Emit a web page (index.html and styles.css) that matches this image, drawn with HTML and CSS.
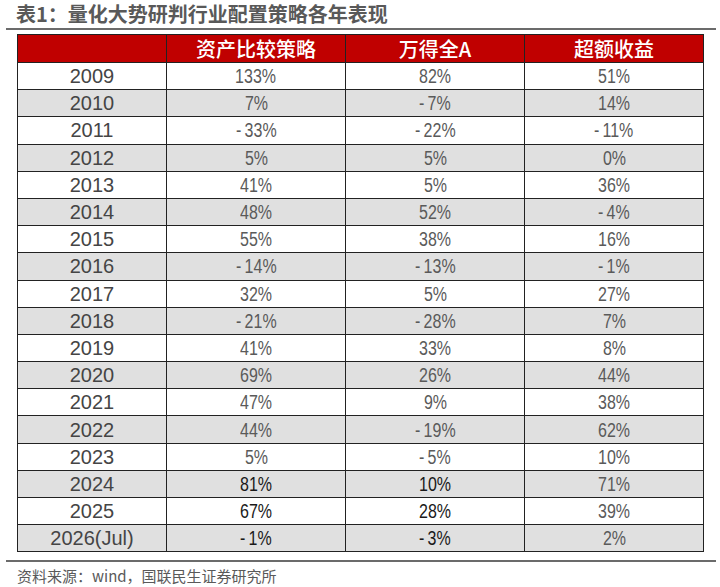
FILE: index.html
```html
<!DOCTYPE html>
<html lang="zh">
<head>
<meta charset="utf-8">
<link rel="stylesheet" href="styles.css">
</head>
<body>
<div class="page">
  <div class="title">表1：量化大势研判行业配置策略各年表现</div>
  <div class="rule"></div>
  <table class="tbl">
    <colgroup>
      <col class="c0"><col class="c1"><col class="c1"><col class="c1">
    </colgroup>
    <thead>
      <tr><th></th><th>资产比较策略</th><th>万得全A</th><th>超额收益</th></tr>
    </thead>
    <tbody>
      <tr><td class="yr">2009</td><td><span class="n">133%</span></td><td><span class="n">82%</span></td><td><span class="n">51%</span></td></tr>
      <tr class="alt"><td class="yr">2010</td><td><span class="n">7%</span></td><td><span class="n">-&#8201;7%</span></td><td><span class="n">14%</span></td></tr>
      <tr><td class="yr">2011</td><td><span class="n">-&#8201;33%</span></td><td><span class="n">-&#8201;22%</span></td><td><span class="n">-&#8201;11%</span></td></tr>
      <tr class="alt"><td class="yr">2012</td><td><span class="n">5%</span></td><td><span class="n">5%</span></td><td><span class="n">0%</span></td></tr>
      <tr><td class="yr">2013</td><td><span class="n">41%</span></td><td><span class="n">5%</span></td><td><span class="n">36%</span></td></tr>
      <tr class="alt"><td class="yr">2014</td><td><span class="n">48%</span></td><td><span class="n">52%</span></td><td><span class="n">-&#8201;4%</span></td></tr>
      <tr><td class="yr">2015</td><td><span class="n">55%</span></td><td><span class="n">38%</span></td><td><span class="n">16%</span></td></tr>
      <tr class="alt"><td class="yr">2016</td><td><span class="n">-&#8201;14%</span></td><td><span class="n">-&#8201;13%</span></td><td><span class="n">-&#8201;1%</span></td></tr>
      <tr><td class="yr">2017</td><td><span class="n">32%</span></td><td><span class="n">5%</span></td><td><span class="n">27%</span></td></tr>
      <tr class="alt"><td class="yr">2018</td><td><span class="n">-&#8201;21%</span></td><td><span class="n">-&#8201;28%</span></td><td><span class="n">7%</span></td></tr>
      <tr><td class="yr">2019</td><td><span class="n">41%</span></td><td><span class="n">33%</span></td><td><span class="n">8%</span></td></tr>
      <tr class="alt"><td class="yr">2020</td><td><span class="n">69%</span></td><td><span class="n">26%</span></td><td><span class="n">44%</span></td></tr>
      <tr><td class="yr">2021</td><td><span class="n">47%</span></td><td><span class="n">9%</span></td><td><span class="n">38%</span></td></tr>
      <tr class="alt"><td class="yr">2022</td><td><span class="n">44%</span></td><td><span class="n">-&#8201;19%</span></td><td><span class="n">62%</span></td></tr>
      <tr><td class="yr">2023</td><td><span class="n">5%</span></td><td><span class="n">-&#8201;5%</span></td><td><span class="n">10%</span></td></tr>
      <tr class="alt"><td class="yr">2024</td><td class="dk"><span class="n">81%</span></td><td class="dk"><span class="n">10%</span></td><td><span class="n">71%</span></td></tr>
      <tr><td class="yr">2025</td><td class="dk"><span class="n">67%</span></td><td class="dk"><span class="n">28%</span></td><td><span class="n">39%</span></td></tr>
      <tr class="alt"><td class="yr">2026(Jul)</td><td class="dk"><span class="n">-&#8201;1%</span></td><td class="dk"><span class="n">-&#8201;3%</span></td><td><span class="n">2%</span></td></tr>
    </tbody>
  </table>
  <div class="rule bottom"></div>
  <div class="source">资料来源：wind，国联民生证券研究所</div>
</div>
</body>
</html>
```

FILE: styles.css
```css
html, body {
  margin: 0;
  padding: 0;
  background: #ffffff;
}
.page {
  width: 720px;
  height: 587px;
  padding-top: 3px;
  box-sizing: border-box;
  font-family: "Liberation Sans", "Noto Sans CJK SC", sans-serif;
}
.title {
  margin-left: 16px;
  font-family: "Noto Sans CJK SC", sans-serif;
  font-weight: 700;
  font-size: 20px;
  line-height: 22px;
  color: #595959;
}
.rule {
  margin: 3px 4px 0 6px;
  height: 2px;
  background: #6b6b6b;
}
.tbl {
  margin: 4px 0 0 17px;
  border-collapse: collapse;
  table-layout: fixed;
  width: 686px;
  border: 1.5px solid #222;
}
.c0 { width: 149px; }
.c1 { width: 179px; }
.tbl th {
  background: #c00000;
  color: #ffffff;
  font-family: "Noto Sans CJK SC", sans-serif;
  font-weight: 500;
  font-size: 20px;
  height: 27px;
  padding: 0;
  line-height: 22px;
  border: 1px solid #222;
}
.tbl td {
  height: 26.2px;
  padding: 0;
  text-align: center;
  border: 1px solid #222;
  font-family: "Liberation Sans", sans-serif;
  font-size: 20px;
  color: #5a5a5a;
  line-height: 20px;
}
.tbl td .n {
  display: inline-block;
  transform: scaleX(0.8);
}
.tbl td.yr {
  font-family: "Liberation Sans", sans-serif;
  font-size: 20px;
  color: #454545;
}
.tbl td.dk {
  color: #1a1a1a;
}
.tbl tr.alt td {
  background: #e0e0e0;
}
.rule.bottom {
  margin-top: 8px;
}
.source {
  margin: 5px 0 0 17px;
  font-family: "Noto Sans CJK SC", sans-serif;
  font-size: 15px;
  line-height: 18px;
  color: #595959;
}
```
